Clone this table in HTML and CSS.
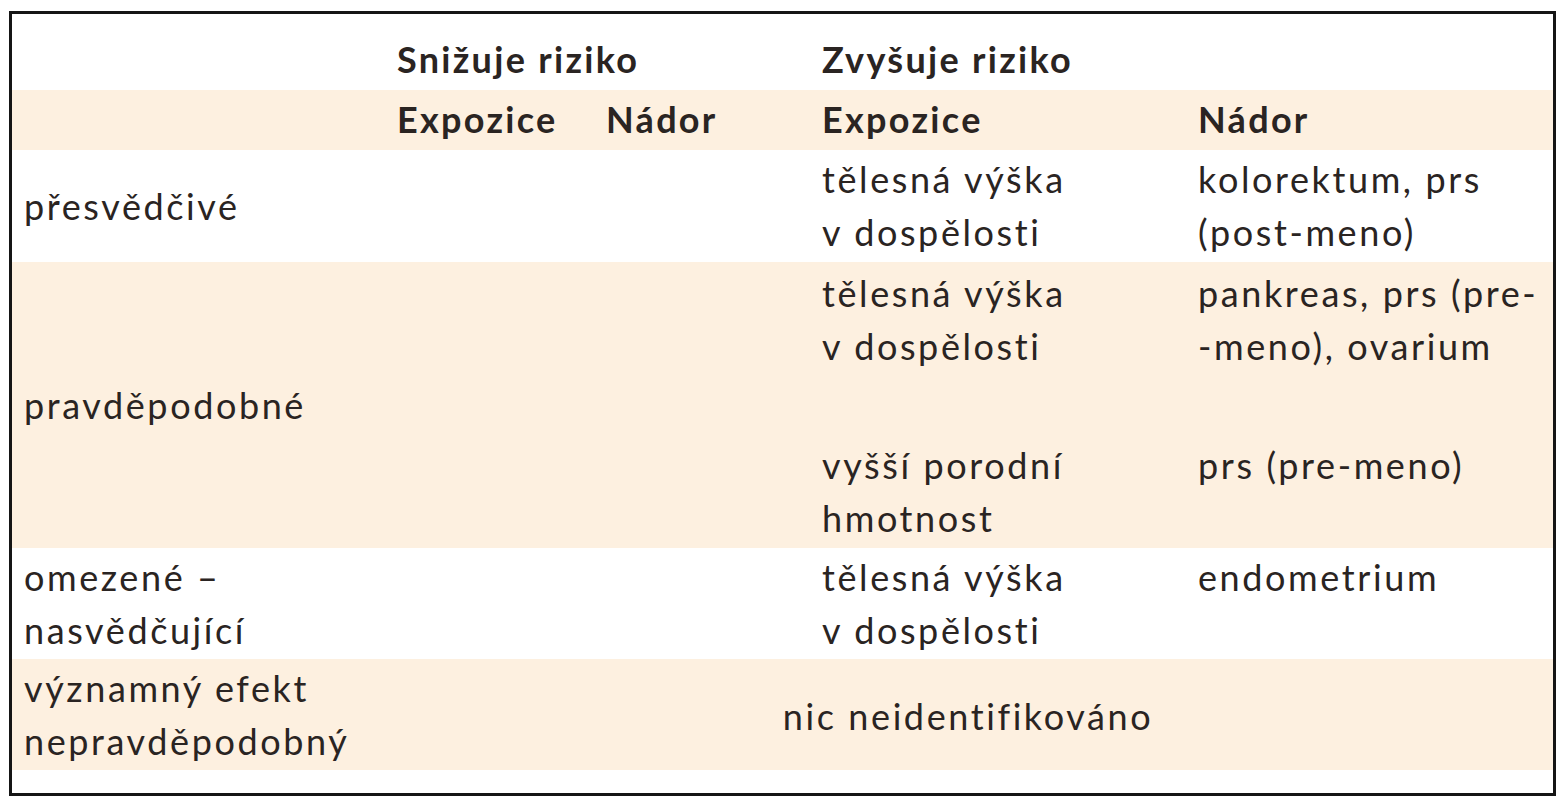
FILE: index.html
```html
<!DOCTYPE html>
<html lang="cs">
<head>
<meta charset="utf-8">
<title>Riziko</title>
<link rel="stylesheet" href="styles.css">
</head>
<body>
<div class="frame">
  <table class="risk">
    <colgroup>
      <col class="c1"><col class="c2"><col class="c3"><col class="c4"><col class="c5">
    </colgroup>
    <tr class="hrow1">
      <td></td>
      <th colspan="2">Snižuje riziko</th>
      <th colspan="2">Zvyšuje riziko</th>
    </tr>
    <tr class="hrow2 shade">
      <td></td>
      <th>Expozice</th>
      <th>Nádor</th>
      <th>Expozice</th>
      <th>Nádor</th>
    </tr>
    <tr class="row3">
      <td class="label">přesvědčivé</td>
      <td></td>
      <td></td>
      <td>tělesná výška<br>v dospělosti</td>
      <td>kolorektum, prs<br>(post-meno)</td>
    </tr>
    <tr class="row4a shade">
      <td class="label" rowspan="2">pravděpodobné</td>
      <td></td>
      <td></td>
      <td>tělesná výška<br>v dospělosti</td>
      <td>pankreas, prs (pre-<br>-meno), ovarium</td>
    </tr>
    <tr class="row4b shade">
      <td></td>
      <td></td>
      <td>vyšší porodní<br>hmotnost</td>
      <td>prs (pre-meno)</td>
    </tr>
    <tr class="row5">
      <td>omezené –<br>nasvědčující</td>
      <td></td>
      <td></td>
      <td>tělesná výška<br>v dospělosti</td>
      <td>endometrium</td>
    </tr>
    <tr class="row6 shade">
      <td>významný efekt<br>nepravděpodobný</td>
      <td class="none" colspan="4">nic neidentifikováno</td>
    </tr>
  </table>
</div>
</body>
</html>
```
FILE: styles.css
```css
html, body {
  margin: 0;
  padding: 0;
  background: #ffffff;
}

.frame {
  margin: 11px 0 0 9px;
  width: 1541px;
  border: 3px solid #151515;
  padding-bottom: 23px;
}

.risk {
  width: 1541px;
  border-collapse: collapse;
  table-layout: fixed;
  font-family: Lato, "Open Sans", sans-serif;
  font-size: 36px;
  line-height: 53px;
  letter-spacing: 2.6px;
  color: #2a2422;
}

.c1 { width: 371px; }
.c2 { width: 209px; }
.c3 { width: 216px; }
.c4 { width: 376px; }
.c5 { width: 369px; }

.risk th,
.risk td {
  padding: 0 0 0 14px;
  text-align: left;
  vertical-align: top;
  white-space: nowrap;
}

.risk td:first-child {
  padding-left: 12px;
}

.risk th {
  font-weight: 700;
  letter-spacing: 2.3px;
}

.shade td,
.shade th {
  background: #fdf0e0;
}

.hrow1 { height: 76px; }
.hrow1 th, .hrow1 td { padding-top: 19px; }

.hrow2 { height: 60px; }
.hrow2 th, .hrow2 td { padding-top: 3px; }

.row3 { height: 112px; }
.row3 td { padding-top: 3px; }
.row3 td.label { vertical-align: middle; padding-top: 0; }

.row4a { height: 143px; }
.row4a td { padding-top: 5px; }
.row4a td.label { vertical-align: middle; padding-top: 0; }

.row4b { height: 143px; }
.row4b td { padding-top: 34px; }

.row5 { height: 111px; }
.row5 td { padding-top: 3px; }

.row6 { height: 111px; }
.row6 td { padding-top: 3px; }
.row6 td.none {
  text-align: center;
  vertical-align: middle;
  padding-left: 0;
}
```
